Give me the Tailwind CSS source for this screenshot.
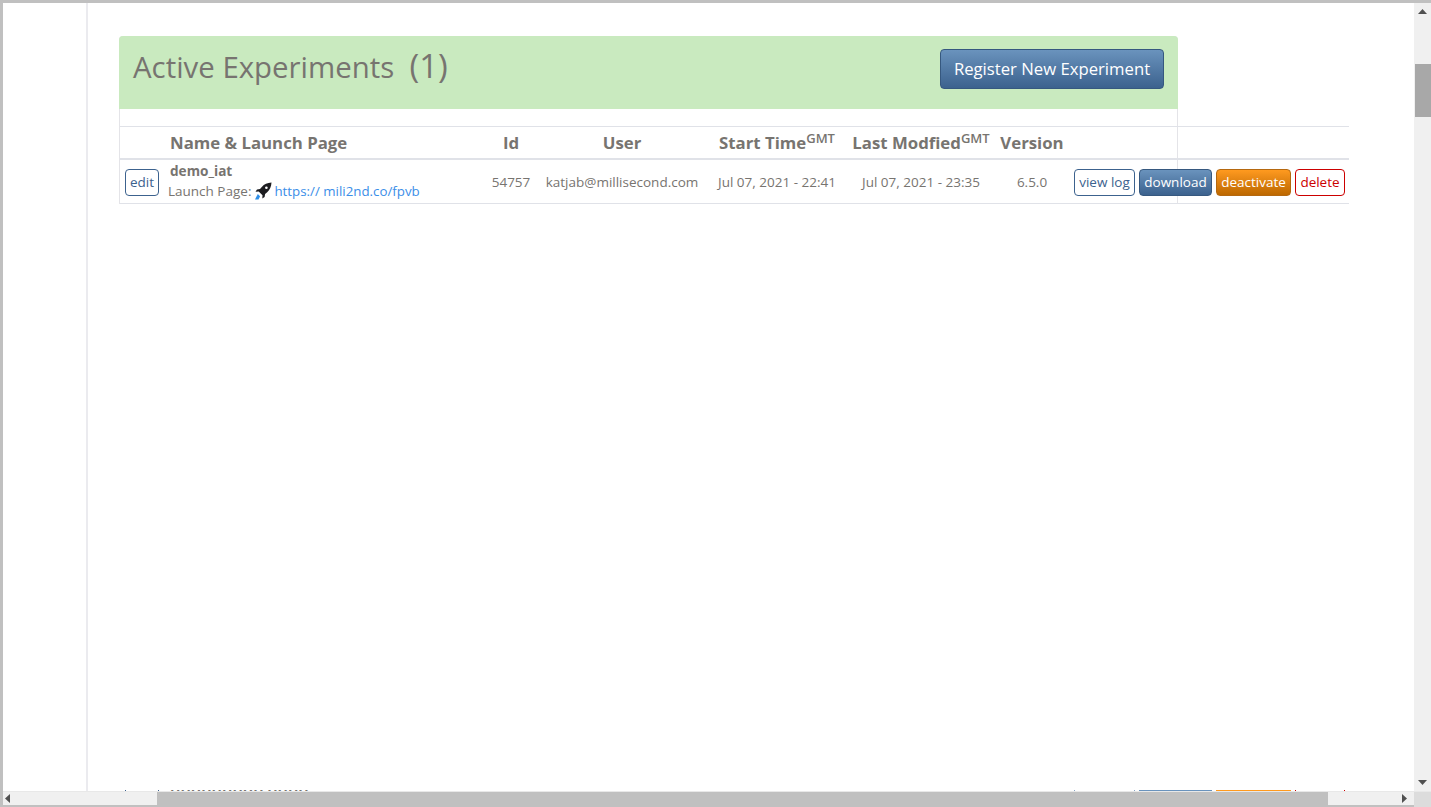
<!DOCTYPE html>
<html lang="en">
<head>
    <meta charset="UTF-8">
    <title>Active Experiments</title>
    <script src="https://cdn.jsdelivr.net/npm/@tailwindcss/browser@4"></script>
</head>
<body class="overflow-hidden bg-white font-['Open_Sans',sans-serif] text-[#777470]">
<div class="w-[1431px] h-[807px] flex flex-col border-t-[3px] border-l-[3px] border-[#c0c0c0] overflow-hidden">
    <div class="flex h-[788px]">
        <!-- Page -->
        <div class="flex-1 flex overflow-hidden">
            <div class="w-[85px] shrink-0 border-r-2 border-[#ebebef]"></div>
            <div class="flex-1 pl-[31px] pt-[33px] overflow-hidden">
                <!-- Panel -->
                <div class="w-[1059px] h-[168px] rounded-t border-x border-t border-[#e4e4e8]">
                    <div class="h-[73px] -mx-px -mt-px bg-[#c9eabf] rounded-t flex items-center justify-between pl-[14px] pr-[14px]">
                        <h1 class="text-[29.4px] leading-[40px] -mt-[13px] whitespace-pre">Active Experiments  <span class="text-[33px]">(1)</span></h1>
                        <button class="w-[224px] h-[40px] -mt-[7px] rounded border border-[#36587f] bg-gradient-to-b from-[#6a93bd] to-[#3c628e] text-white text-[16.7px]">Register New Experiment</button>
                    </div>
                    <!-- Table -->
                    <div class="w-[1229px] mt-[17px]">
                        <div class="h-[34px] pt-[1px] flex items-center border-t border-b-2 border-[#e0e2e8] text-[16.8px] font-bold whitespace-nowrap">
                            <div class="w-[50px]"></div>
                            <div class="w-[316px]">Name &amp; Launch Page</div>
                            <div class="w-[50px] text-center">Id</div>
                            <div class="w-[172px] text-center">User</div>
                            <div class="w-[138px] text-center">Start Time<sup class="text-[13px] font-semibold">GMT</sup></div>
                            <div class="w-[150px] text-center">Last Modfied<sup class="text-[13px] font-semibold">GMT</sup></div>
                            <div class="w-[72px] text-center">Version</div>
                        </div>
                        <div class="h-[44px] flex items-center border-b border-[#e0e2e8] text-[13.5px] whitespace-nowrap">
                            <div class="w-[50px] pl-[5px] pt-[2px]">
                                <button class="w-[34px] h-[27px] rounded border border-[#3c628e] bg-white text-[#3c628e]">edit</button>
                            </div>
                            <div class="w-[316px] leading-[20px]">
                                <div class="font-bold text-[13.6px] -mt-[1px]">demo_iat</div>
                                <div class="flex items-center -ml-[2px]">
                                    <span>Launch Page:</span>
                                    <svg class="w-[18px] h-[18px] ml-[3px] mr-[2px]" viewBox="0 0 18 18"><path d="M17.500.5c-4.200.3-7.300 1.700-9.700 4.400L6 7l-3 .5-1.500 2.300 3.200-.2 3.800 3.700-.2 3.200 2.300-1.500.5-3 2.100-1.800C15.900 7.800 17.200 4.700 17.500.5z" fill="#1c1c20"/><circle cx="12.400" cy="5.700" r="1.300" fill="#fff"/><path d="M3.800 12l2.300 2.300-1.600 3.200H1z" fill="#2f8fe8"/></svg>
                                    <a class="text-[#3b8ee8] text-[13.3px]" href="#">https:// mili2nd.co/fpvb</a>
                                </div>
                            </div>
                            <div class="w-[50px] text-center pt-[1px]">54757</div>
                            <div class="w-[172px] text-center pt-[1px]">katjab@millisecond.com</div>
                            <div class="w-[138px] text-center pt-[1px]">Jul 07, 2021 - 22:41</div>
                            <div class="w-[150px] text-center pt-[1px]">Jul 07, 2021 - 23:35</div>
                            <div class="w-[72px] text-center pt-[1px]">6.5.0</div>
                            <div class="flex gap-[4px] ml-[6px] pt-[2px]">
                                <button class="w-[61px] h-[27px] rounded border border-[#3c628e] bg-white text-[#3c628e]">view log</button>
                                <button class="w-[73px] h-[27px] rounded border border-[#36587f] bg-gradient-to-b from-[#6a93bd] to-[#3c628e] text-white">download</button>
                                <button class="w-[75px] h-[27px] rounded border border-[#b5680f] bg-gradient-to-b from-[#ff9a1f] to-[#bd6800] text-white">deactivate</button>
                                <button class="w-[50px] h-[27px] rounded border border-[#cc0000] bg-white text-[#cc0000]">delete</button>
                            </div>
                        </div>
                    </div>
                </div>
                <!-- Next row, cut off by the scroll area -->
                <div class="w-[1229px] mt-[586px] h-[27px] flex items-start text-[13.6px] whitespace-nowrap">
                    <div class="w-[51px] pl-[6px]"><div class="w-[34px] h-[27px] border-x border-[#3c628e]"></div></div>
                    <div class="w-[904px] -mt-[5px] leading-[19px] font-bold">HHHHHHHHH HHHH</div>
                    <div class="flex gap-[4px]">
                        <div class="w-[61px] h-[27px] border-x border-[#8aa6c4]"></div>
                        <div class="w-[73px] h-[27px] bg-[#6a93bd]"></div>
                        <div class="w-[75px] h-[27px] bg-[#ff9a1f]"></div>
                        <div class="w-[50px] h-[27px] border-x border-[#cc0000]"></div>
                    </div>
                </div>
            </div>
        </div>
        <!-- Vertical scrollbar -->
        <div class="w-[17px] shrink-0 bg-[#f0f0f0] flex flex-col items-center">
            <div class="h-[17px] flex items-center justify-center text-[#505050]"><svg class="w-[9px] h-[5px]" viewBox="0 0 9 5"><path d="M4.500 0L9 5H0z" fill="currentColor"/></svg></div>
            <div class="w-[16px] h-[53px] mt-[44px] bg-[#a8a8a8]"></div>
            <div class="flex-1"></div>
            <div class="h-[17px] flex items-center justify-center text-[#505050]"><svg class="w-[9px] h-[5px]" viewBox="0 0 9 5"><path d="M4.500 5L9 0H0z" fill="currentColor"/></svg></div>
        </div>
    </div>
    <!-- Horizontal scrollbar -->
    <div class="flex h-[16px] bg-[#c0c0c0] border-t border-[#e8e8e8]">
        <div class="w-[154px] bg-[#f0f0f0] border-b-2 border-[#c0c0c0] flex items-center pl-[2px] text-[#505050]"><svg class="w-[5px] h-[9px]" viewBox="0 0 5 9"><path d="M0 4.500L5 0v9z" fill="currentColor"/></svg></div>
        <div class="flex-1"></div>
        <div class="w-[86px] bg-[#f0f0f0] border-b-2 border-[#c0c0c0] flex items-center justify-end pr-[7px] text-[#505050]"><svg class="w-[5px] h-[9px]" viewBox="0 0 5 9"><path d="M5 4.500L0 0v9z" fill="currentColor"/></svg></div>
        <div class="w-[17px] bg-[#dcdcdc]"></div>
    </div>
</div>
</body>
</html>
